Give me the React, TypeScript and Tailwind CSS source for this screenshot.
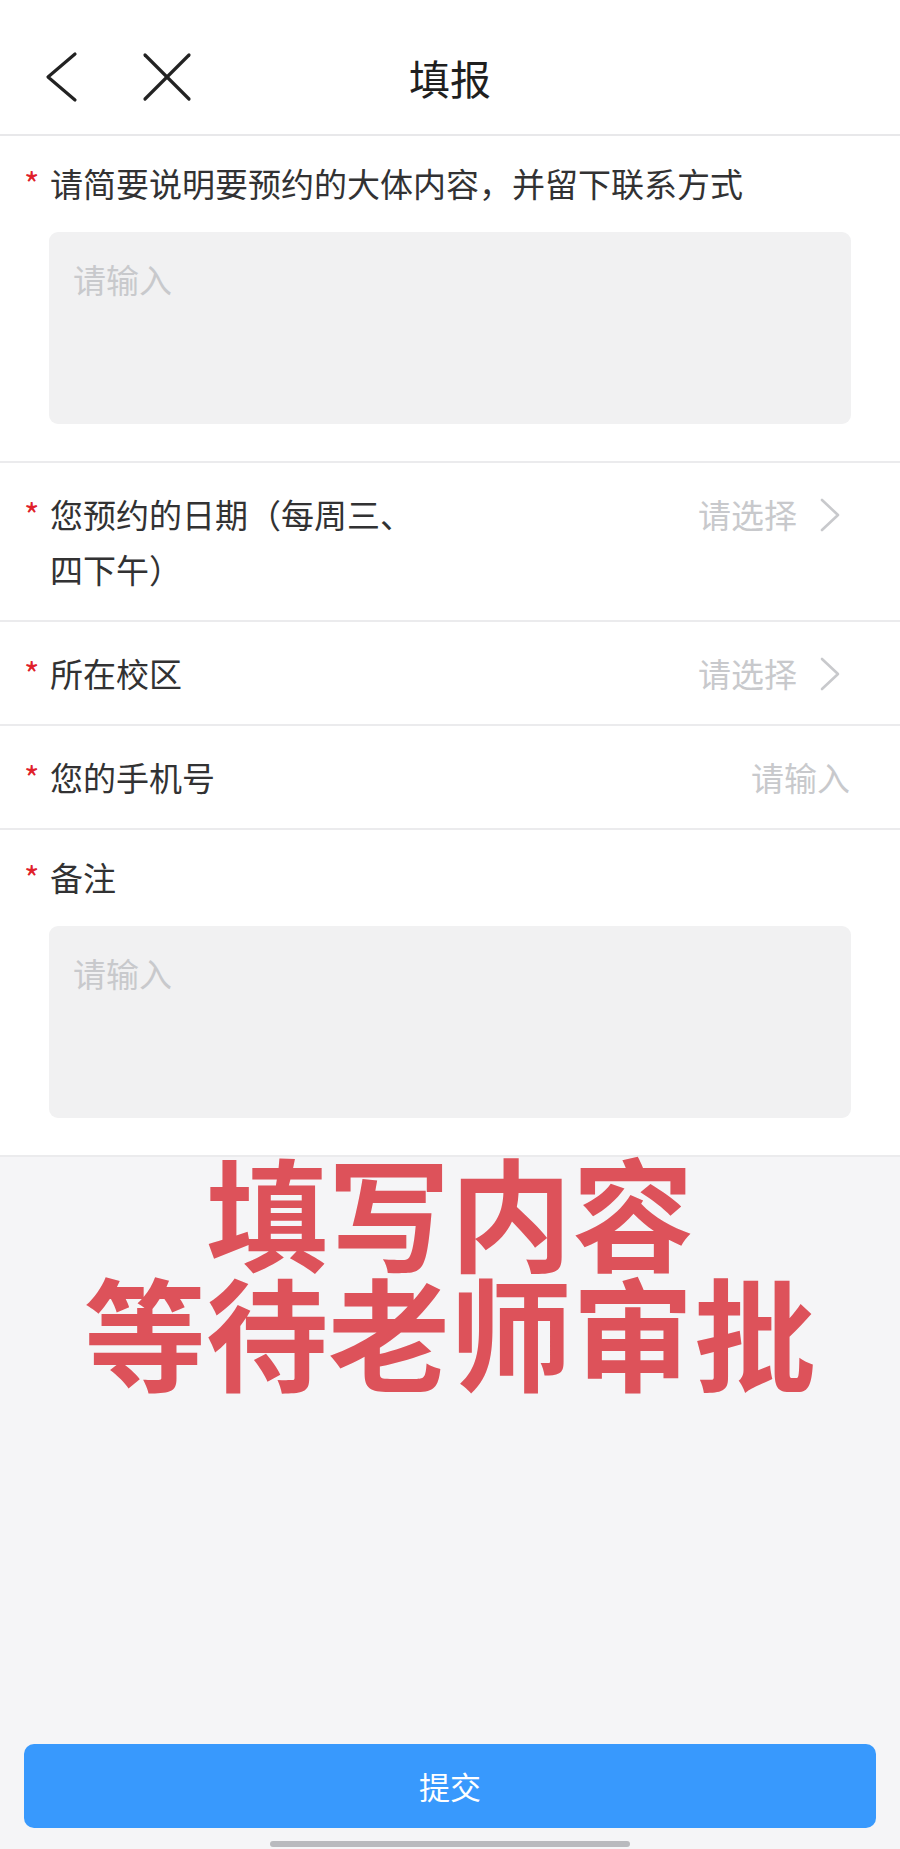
import React from "react";

const Star = () => (
  <span className="w-[26px] shrink-0 text-[#e0202a]">*</span>
);

const Chevron = () => (
  <svg width="22" height="34" viewBox="0 0 22 34" className="ml-[22px] mt-[11px] shrink-0">
    <polyline points="3,2 19,17 3,32" fill="none" stroke="#c8c9cc" strokeWidth="2.6" strokeLinecap="round" strokeLinejoin="round" />
  </svg>
);

function SelectRow({ label, labelWidth }: { label: string; labelWidth?: string }) {
  return (
    <div className="flex items-start justify-between border-b-2 border-[#ebebed] bg-white pl-[24px] pr-[59px] pt-[24px] pb-[23px] leading-[55px]">
      <div className="flex">
        <Star />
        <span className={labelWidth ?? ""}>{label}</span>
      </div>
      <div className="flex items-start text-[#c8c9cc]">
        <span>请选择</span>
        <Chevron />
      </div>
    </div>
  );
}

function TextAreaSection({ label }: { label: string }) {
  return (
    <div className="border-b-2 border-[#ebebed] bg-white pt-[20px] pb-[37px]">
      <div className="flex pl-[24px] leading-[55px]">
        <Star />
        <span>{label}</span>
      </div>
      <div className="mx-[49px] mt-[21px] h-[192px] rounded-[9px] bg-[#f1f1f2] px-[24px] pt-[20px] leading-[55px] text-[#c8c9cc]">
        请输入
      </div>
    </div>
  );
}

export default function App() {
  return (
    <div className="flex h-[1849px] flex-col bg-[#f5f5f7] font-['Noto_Sans_CJK_SC','Noto_Sans',sans-serif] text-[33px] text-[#323233]">
      <header className="grid h-[136px] grid-cols-[1fr_auto_1fr] items-center border-b-2 border-[#e8e8ea] bg-white pt-[20px]">
        <div className="flex items-center pl-[44px]">
          <svg width="36" height="52" viewBox="0 0 36 52">
            <polyline points="31,3 4,26 31,49" fill="none" stroke="#222" strokeWidth="3.2" strokeLinecap="round" strokeLinejoin="round" />
          </svg>
          <svg width="52" height="50" viewBox="0 0 52 50" className="ml-[61px]">
            <line x1="4" y1="3" x2="48" y2="47" stroke="#222" strokeWidth="3.2" strokeLinecap="round" />
            <line x1="48" y1="3" x2="4" y2="47" stroke="#222" strokeWidth="3.2" strokeLinecap="round" />
          </svg>
        </div>
        <h1 className="text-[41px] leading-none text-[#1f1f1f]">填报</h1>
        <div />
      </header>

      <TextAreaSection label="请简要说明要预约的大体内容，并留下联系方式" />
      <SelectRow label="您预约的日期（每周三、四下午）" labelWidth="w-[375px]" />
      <SelectRow label="所在校区" />
      <div className="flex items-start justify-between border-b-2 border-[#ebebed] bg-white pl-[24px] pr-[50px] pt-[24px] pb-[23px] leading-[55px]">
        <div className="flex">
          <Star />
          <span>您的手机号</span>
        </div>
        <span className="text-[#c8c9cc]">请输入</span>
      </div>
      <TextAreaSection label="备注" />

      <div className="flex flex-1 flex-col items-center">
        <p className="mt-[-8px] text-center text-[122px] font-bold leading-[120px] text-[#dd525a]">
          填写内容
          <br />
          等待老师审批
        </p>
      </div>

      <button className="mx-[24px] h-[84px] rounded-[10px] bg-[#3899fd] text-[31px] text-white">
        提交
      </button>
      <div className="mx-auto mb-[2px] mt-[13px] h-[6px] w-[360px] rounded-full bg-[#b9babe]" />
    </div>
  );
}
